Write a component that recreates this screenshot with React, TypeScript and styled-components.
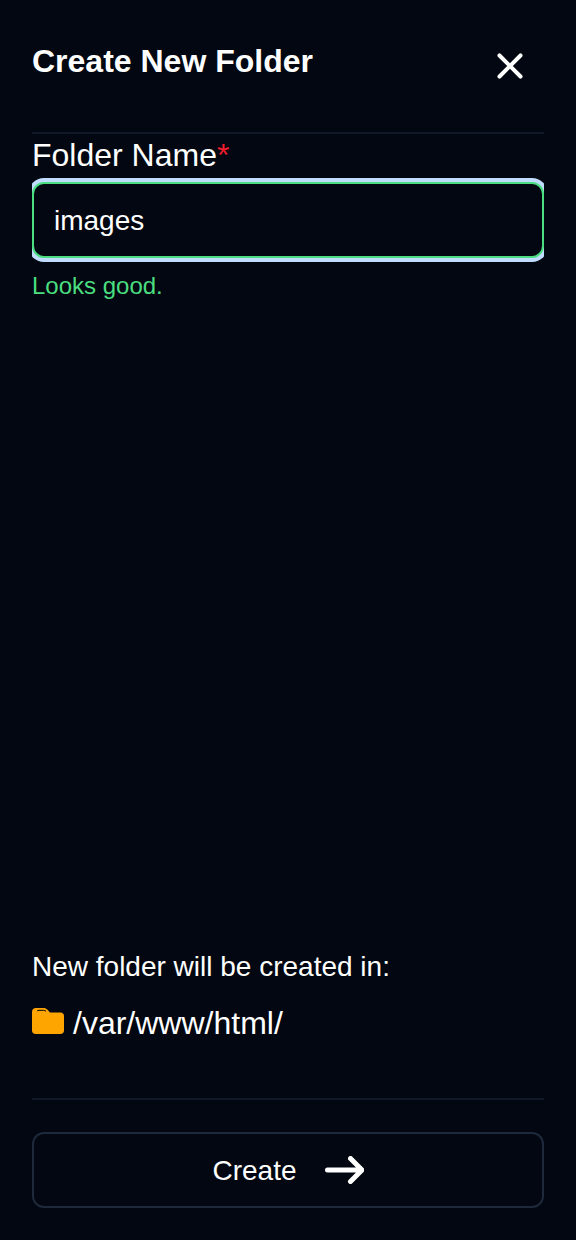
import React from 'react'
import styled, { createGlobalStyle } from 'styled-components'
import { X } from 'lucide-react'

const GlobalStyle = createGlobalStyle`
  html, body {
    margin: 0;
    padding: 0;
    background: #020711;
    color: #fff;
    font-family: "Liberation Sans", Arial, sans-serif;
  }
  * {
    box-sizing: border-box;
  }
`

export default function App() {
  return (
    <>
      <GlobalStyle />
      <Page>
        <Header>
          <Title>Create New Folder</Title>
          <CloseButton type="button" aria-label="Close">
            <X size={42} strokeWidth={2.3} color="#fff" />
          </CloseButton>
        </Header>
        <Divider />
        <Body>
          <FieldLabel htmlFor="folder-name">
            Folder Name<Required>*</Required>
          </FieldLabel>
          <InputClip>
            <NameInput id="folder-name" defaultValue="images" />
          </InputClip>
          <Feedback>Looks good.</Feedback>
        </Body>
        <Location>
          <LocationLabel>New folder will be created in:</LocationLabel>
          <PathRow>
            <FolderIcon viewBox="0 0 32 26" aria-hidden="true">
              <path
                d="M4 0h7.500c1.600 0 2.800.5 3.800 1.600L18 4.500h10.500c2 0 3.500 1.500 3.500 3.500v14.500c0 2-1.500 3.500-3.500 3.500h-25C1.500 26 0 24.500 0 22.500V4c0-2.400 1.600-4 4-4z"
                fill="#ffa500"
              />
              <path d="M5 3.200c.5-.7 1-.9 2-.9h4.500c1 0 1.800.3 2.500 1" fill="none" stroke="#020711" strokeWidth="1" />
            </FolderIcon>
            <PathText>/var/www/html/</PathText>
          </PathRow>
        </Location>
        <Divider />
        <Footer>
          <CreateButton type="button">
            <ButtonLabel>Create</ButtonLabel>
            <ArrowIcon viewBox="0 0 39 28" aria-hidden="true">
              <path
                d="M2.500 14h33M25.500 2.500 37 14 25.500 25.500"
                fill="none"
                stroke="#fff"
                strokeWidth="5"
                strokeLinecap="round"
                strokeLinejoin="round"
              />
            </ArrowIcon>
          </CreateButton>
        </Footer>
      </Page>
    </>
  )
}

const Page = styled.div`
  display: flex;
  flex-direction: column;
  height: 1240px;
  padding: 0 32px 32px;
  background: #020711;
`

const Header = styled.div`
  display: flex;
  justify-content: space-between;
  align-items: flex-start;
  height: 132px;
  padding-top: 43px;
`

const Title = styled.h2`
  margin: 0;
  font-size: 32px;
  line-height: 36px;
  font-weight: 700;
  color: #fff;
`

const CloseButton = styled.button`
  display: flex;
  padding: 0;
  margin: 2px 13px 0 0;
  border: 0;
  background: transparent;
`

const Divider = styled.div`
  flex: none;
  height: 2px;
  background: #111827;
`

const Body = styled.div`
  display: flex;
  flex-direction: column;
  flex: 1;
`

const FieldLabel = styled.label`
  display: block;
  padding-top: 1px;
  height: 40px;
  font-size: 32px;
  line-height: 40px;
  color: #fff;
`

const Required = styled.span`
  color: #ef1c2e;
`

const InputClip = styled.div`
  overflow: hidden;
  margin-top: 4px;
  padding: 4px 0;
`

const NameInput = styled.input`
  display: block;
  width: 100%;
  height: 76px;
  padding: 2px 20px 0;
  border: 2px solid #4ade80;
  border-radius: 12px;
  background: #020711;
  color: #fff;
  font-family: inherit;
  font-size: 28px;
  outline: none;
  box-shadow: 0 0 0 4px #bfdbfe;
`

const Feedback = styled.p`
  margin: 8px 0 0;
  font-size: 24px;
  line-height: 32px;
  color: #4ade80;
`

const Location = styled.div`
  display: flex;
  flex-direction: column;
  height: 150px;
  padding-top: 3px;
`

const LocationLabel = styled.div`
  font-size: 28px;
  line-height: 32px;
  color: #fff;
`

const PathRow = styled.div`
  display: flex;
  align-items: center;
  gap: 9px;
  margin-top: 20px;
`

const FolderIcon = styled.svg`
  width: 32px;
  height: 26px;
  flex: none;
  margin-bottom: 4px;
`

const PathText = styled.span`
  font-size: 32px;
  line-height: 40px;
  color: #fff;
`

const Footer = styled.div`
  padding-top: 32px;
`

const CreateButton = styled.button`
  display: flex;
  align-items: center;
  justify-content: center;
  gap: 28px;
  width: 100%;
  height: 76px;
  padding: 0;
  border: 2px solid #1e293b;
  border-radius: 12px;
  background: transparent;
  color: #fff;
  font-family: inherit;
  font-size: 28px;
`

const ButtonLabel = styled.span`
  padding-top: 2px;
`

const ArrowIcon = styled.svg`
  width: 39px;
  height: 28px;
  flex: none;
`
